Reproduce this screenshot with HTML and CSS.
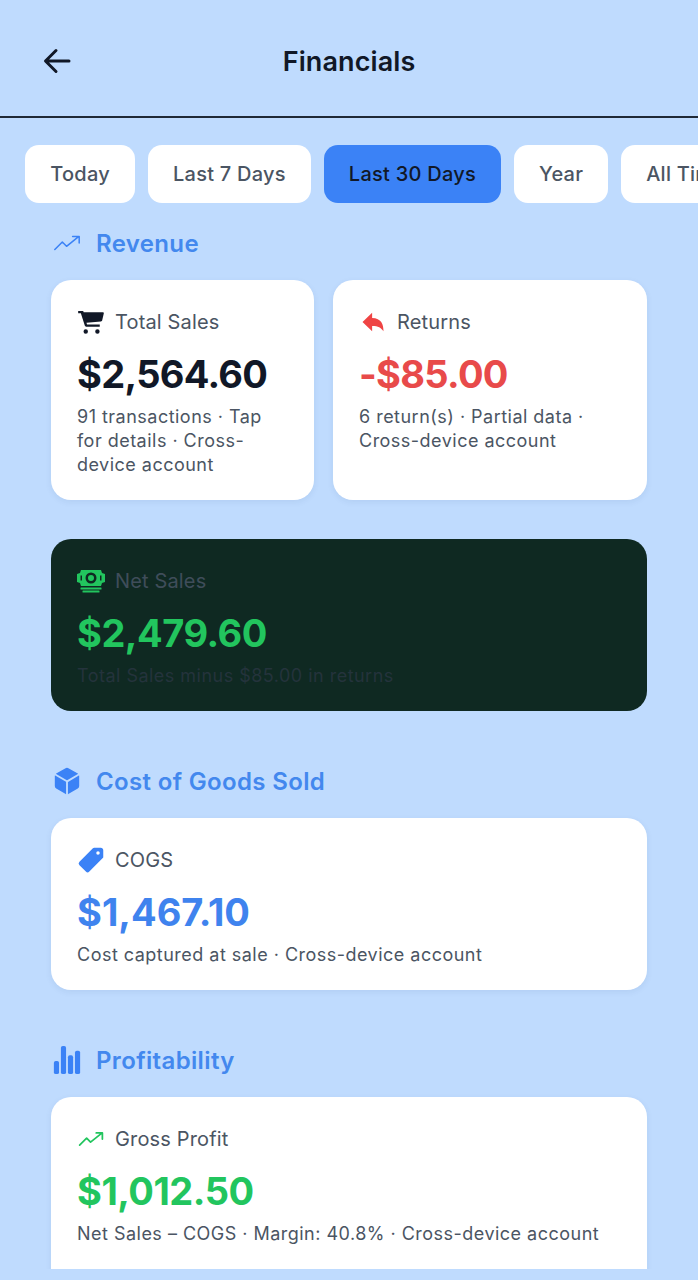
FILE: index.html
```html
<!DOCTYPE html>
<html lang="en">
<head>
    <meta charset="UTF-8">
    <meta name="viewport" content="width=device-width, initial-scale=1.0">
    <title>Financials</title>
    <link rel="stylesheet" href="styles.css">
</head>
<body>
    <div class="screen">
        <header class="header">
            <svg class="back-icon" viewBox="0 0 32 32"><path d="M28 16H5M15 5.500 4.500 16 15 26.500"/></svg>
            <h1>Financials</h1>
        </header>

        <div class="chips">
            <div class="chip">Today</div>
            <div class="chip">Last 7 Days</div>
            <div class="chip active">Last 30 Days</div>
            <div class="chip">Year</div>
            <div class="chip">All Time</div>
        </div>

        <main class="content">
            <h2 class="section-title first">
                <svg class="section-icon" viewBox="0 0 512 512"><path class="trend" d="M352 144h112v112M48 368l128-128 72 72L448 152"/></svg>
                Revenue
            </h2>
            <div class="two-col">
                <div class="card">
                    <div class="card-label">
                        <svg class="card-icon dark" viewBox="0 0 24 24"><path d="M7.500 18.200a1.900 1.900 0 1 0 0 3.800 1.900 1.900 0 0 0 0-3.800zM17.500 18.200a1.900 1.900 0 1 0 0 3.800 1.900 1.900 0 0 0 0-3.800zM1 2.500v1.900h2.300l3.300 10.300c.2.800.9 1.300 1.700 1.300h11.200v-1.900H8.600l-.5-1.500 12.400-1.100c.6 0 1-.4 1.100-1L23 4.500c0-.5-.3-.9-.9-.9H5.700l-.4-1.100z"/></svg>
                        Total Sales
                    </div>
                    <div class="value">$2,564.60</div>
                    <p class="note">91 transactions · Tap for details · Cross-device account</p>
                </div>
                <div class="card">
                    <div class="card-label">
                        <svg class="card-icon red" viewBox="0 0 512 512"><path d="M240 424v-96c116.400 0 159.390 33.760 208 96 0-119.230-39.570-240-208-240V88L64 256z"/></svg>
                        Returns
                    </div>
                    <div class="value red-text">-$85.00</div>
                    <p class="note">6 return(s) · Partial data · Cross-device account</p>
                </div>
            </div>

            <div class="card dark-card">
                <div class="card-label">
                    <svg class="card-icon green" viewBox="0 0 28 24">
                        <path fill-rule="evenodd" d="M4 1h20l1 3 3 1v8l-3 1-1 3H4l-1-3-3-1V5l3-1zm10 2.500a5.500 5.500 0 1 0 0 11 5.500 5.500 0 0 0 0-11zm0 2.500a3 3 0 1 1 0 6 3 3 0 0 1 0-6zM5 6.500H3.500v5H5zm18 0v5h1.500v-5z"/>
                        <rect x="3.500" y="18.500" width="21" height="2" rx=".5"/>
                        <rect x="5.500" y="21.500" width="17" height="2" rx=".5"/>
                    </svg>
                    Net Sales
                </div>
                <div class="value green-text">$2,479.60</div>
                <p class="note">Total Sales minus $85.00 in returns</p>
            </div>

            <h2 class="section-title">
                <svg class="section-icon" viewBox="0 0 512 512"><path d="M440.900 136.300a4 4 0 0 0 0-6.910L288.160 40.650a64.140 64.140 0 0 0-64.330 0L71.120 129.390a4 4 0 0 0 0 6.910L254 243.880a4 4 0 0 0 4.060 0zM54 163.510a4 4 0 0 0-6 3.490v173.890a48 48 0 0 0 23.840 41.390L234 479.510a4 4 0 0 0 6-3.460V274.300a4 4 0 0 0-2-3.460zM272 275v201a4 4 0 0 0 6 3.460l162.150-97.230A48 48 0 0 0 464 340.890V167a4 4 0 0 0-6-3.450l-184 108a4 4 0 0 0-2 3.450z"/></svg>
                Cost of Goods Sold
            </h2>
            <div class="card wide">
                <div class="card-label">
                    <svg class="card-icon blue" viewBox="0 0 512 512"><path d="M467 45.200A44.450 44.450 0 0 0 435.290 32H312.360a30.630 30.630 0 0 0-21.520 8.890L45.090 286.590a44.820 44.820 0 0 0 0 63.320l117 117a44.830 44.830 0 0 0 63.340 0l245.650-245.600A30.600 30.600 0 0 0 480 199.800v-123a44.240 44.240 0 0 0-13-31.600zM384 160a32 32 0 1 1 32-32 32 32 0 0 1-32 32z"/></svg>
                    COGS
                </div>
                <div class="value blue-text">$1,467.10</div>
                <p class="note">Cost captured at sale · Cross-device account</p>
            </div>

            <h2 class="section-title">
                <svg class="section-icon" viewBox="0 0 28 32"><rect x="0" y="17" width="5.500" height="14" rx="2"/><rect x="7.500" y="1" width="5.500" height="30" rx="2"/><rect x="15" y="11" width="5.500" height="20" rx="2"/><rect x="22.500" y="6" width="5.500" height="25" rx="2"/></svg>
                Profitability
            </h2>
            <div class="card wide cut-off">
                <div class="card-label">
                    <svg class="card-icon" viewBox="0 0 512 512"><path class="trend green-line" d="M352 144h112v112M48 368l128-128 72 72L448 152"/></svg>
                    Gross Profit
                </div>
                <div class="value green-text">$1,012.50</div>
                <p class="note">Net Sales – COGS · Margin: 40.8% · Cross-device account</p>
            </div>
        </main>
    </div>
</body>
</html>
```

FILE: styles.css
```css
* {
    box-sizing: border-box;
}
body {
    margin: 0;
    font-family: Inter, "Liberation Sans", sans-serif;
    background-color: #bfdbfe;
    color: #111827;
}
.screen {
    height: 1280px;
    padding-bottom: 11px;
    display: flex;
    flex-direction: column;
    overflow: hidden;
}
.header {
    height: 118px;
    flex-shrink: 0;
    display: flex;
    align-items: center;
    justify-content: center;
    position: relative;
    padding-top: 7px;
    border-bottom: 2px solid #1f2937;
}
.header h1 {
    margin: 0;
    font-size: 27px;
    font-weight: 600;
    letter-spacing: 0.1px;
    color: #111827;
}
.back-icon {
    position: absolute;
    left: 41px;
    top: 45px;
    width: 32px;
    height: 32px;
    fill: none;
    stroke: #111827;
    stroke-width: 3;
    stroke-linecap: round;
    stroke-linejoin: round;
}
.chips {
    display: flex;
    gap: 12.500px;
    padding: 27px 0 0 25px;
    flex-shrink: 0;
}
.chip {
    flex-shrink: 0;
    height: 58px;
    padding: 0 25.250px;
    display: flex;
    align-items: center;
    background: white;
    border-radius: 14px;
    font-size: 20px;
    font-weight: 500;
    letter-spacing: 0.25px;
    color: #4b5563;
}
.chip.active {
    background: #3b82f6;
    color: #111827;
}
.content {
    flex: 1;
    min-height: 0;
    overflow: hidden;
    padding: 0 51px;
}
.section-title {
    margin: 54px 0 21px;
    height: 32px;
    display: flex;
    align-items: center;
    gap: 14px;
    font-size: 24px;
    font-weight: 600;
    letter-spacing: 0.35px;
    color: #4388ee;
}
.section-title.first {
    margin-top: 24px;
}
.section-icon {
    width: 30px;
    height: 30px;
    fill: #3b82f6;
    flex-shrink: 0;
    margin-left: 1px;
}
.trend {
    fill: none;
    stroke: #3b82f6;
    stroke-width: 26;
    stroke-linecap: round;
    stroke-linejoin: round;
}
.green-line {
    stroke: #22c55e;
    stroke-width: 32;
}
.two-col {
    display: grid;
    grid-template-columns: 263px 314px;
    gap: 19px;
}
.card {
    background: white;
    border-radius: 20px;
    padding: 26px 26px 23px;
    box-shadow: 0px 2px 6px rgba(30, 64, 120, 0.08);
}
.wide {
    height: 172px;
}
.cut-off {
    height: 200px;
}
.card-label {
    display: flex;
    align-items: center;
    gap: 10px;
    height: 32px;
    font-size: 20px;
    letter-spacing: 0.15px;
    color: #4b5563;
}
.card-icon {
    width: 28px;
    height: 28px;
    flex-shrink: 0;
}
.dark {
    fill: #111827;
}
.red {
    fill: #ef4444;
}
.green {
    fill: #22c55e;
}
.blue {
    fill: #3b82f6;
}
.value {
    margin-top: 13px;
    font-size: 38px;
    font-weight: 700;
    line-height: 46px;
    letter-spacing: -0.7px;
    color: #111827;
}
.red-text {
    color: #e84a4a;
}
.green-text {
    letter-spacing: -0.5px;
    color: #22c55e;
}
.blue-text {
    letter-spacing: 0;
    color: #3f83ee;
}
.note {
    margin: 8px 0 0;
    font-size: 18px;
    line-height: 24px;
    letter-spacing: 0.48px;
    color: #4b5563;
}
.dark-card {
    margin-top: 39px;
    height: 172px;
    background: #0f2922;
    box-shadow: none;
}
.dark-card .card-label {
    color: #3f4d5a;
}
.dark-card .note {
    color: #24333c;
}
```
